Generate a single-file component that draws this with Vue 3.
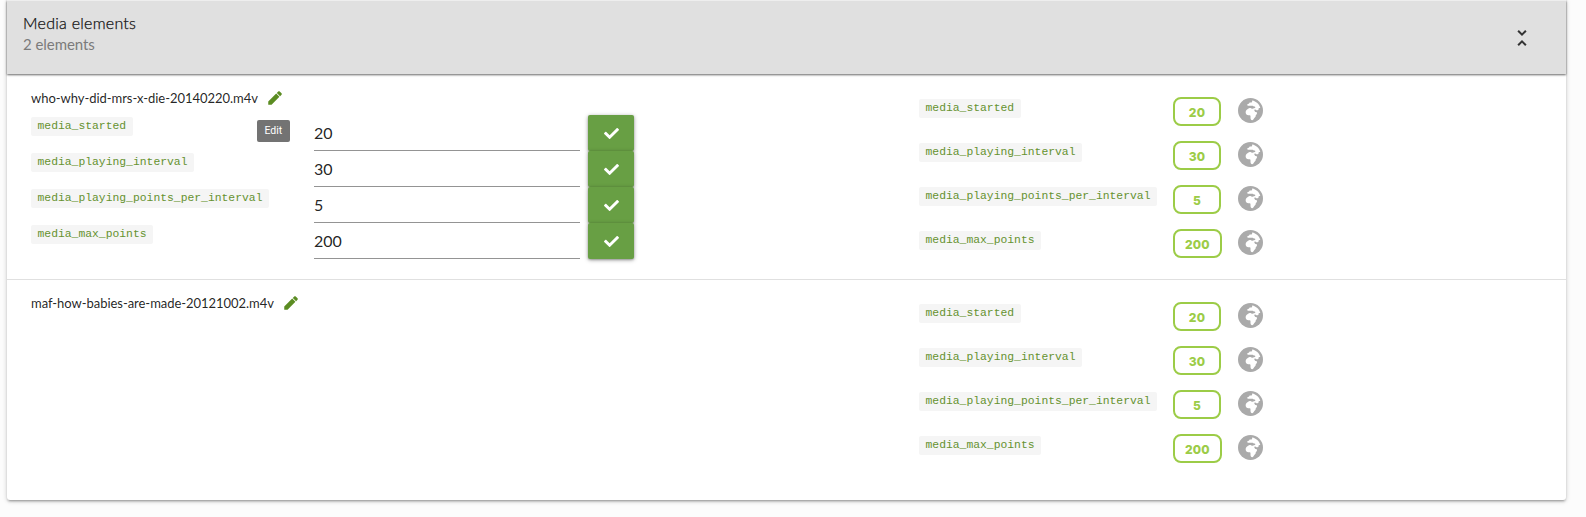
<script setup>
const rows = [
  { key: 'media_started', value: '20' },
  { key: 'media_playing_interval', value: '30' },
  { key: 'media_playing_points_per_interval', value: '5' },
  { key: 'media_max_points', value: '200' },
]
const items = [
  { name: 'who-why-did-mrs-x-die-20140220.m4v', editing: true },
  { name: 'maf-how-babies-are-made-20121002.m4v', editing: false },
]
</script>

<template>
  <div class="page">
    <section class="card">
      <header class="head">
        <div>
          <div class="title">Media elements</div>
          <div class="subtitle">2 elements</div>
        </div>
        <svg class="collapse" viewBox="0 0 24 24">
          <path d="M7.41 18.59L8.83 20 12 16.83 15.17 20l1.41-1.41L12 14l-4.59 4.59zm9.18-13.18L15.17 4 12 7.17 8.83 4 7.41 5.41 12 10l4.59-4.59z" />
        </svg>
      </header>

      <article v-for="item in items" :key="item.name" class="item">
        <div class="left">
          <div class="name">
            <span>{{ item.name }}</span>
            <span class="edit">
              <svg class="pencil" viewBox="0 0 24 24">
                <path d="M3 16.6V21h4.4L17.9 10.4l-4.3-4.3L3 16.6zM20.71 7.7c.6-.6.6-1.4 0-2L18.3 3.29c-.6-.6-1.4-.6-2 0l-1.9 1.9 4.4 4.4 1.91-1.89z" />
              </svg>
              <span v-if="item.editing" class="tooltip">Edit</span>
            </span>
          </div>
          <div v-if="item.editing" class="form">
            <div v-for="row in rows" :key="row.key" class="field">
              <div class="label"><code>{{ row.key }}</code></div>
              <div class="input">{{ row.value }}</div>
              <button class="save">
                <svg viewBox="0 0 512 512">
                  <path d="M173.898 439.404l-166.4-166.4c-9.997-9.997-9.997-26.206 0-36.204l36.203-36.204c9.997-9.998 26.207-9.998 36.204 0L192 312.69 432.095 72.596c9.997-9.997 26.207-9.997 36.204 0l36.203 36.204c9.997 9.997 9.997 26.206 0 36.204l-294.4 294.401c-9.998 9.997-26.207 9.997-36.204-.001z" />
                </svg>
              </button>
            </div>
          </div>
        </div>
        <div class="right">
          <div v-for="row in rows" :key="row.key" class="setting">
            <div class="key"><code>{{ row.key }}</code></div>
            <div class="slot"><span class="badge">{{ row.value }}</span></div>
            <svg class="globe" viewBox="0 8 496 496">
              <circle cx="248" cy="256" r="248" />
              <path d="M408 223.5v6.93c0 5.87-3.32 11.24-8.57 13.86l-15.39 7.7a15.485 15.485 0 0 1-15.53-.97l-18.21-12.14a15.52 15.52 0 0 0-13.5-1.81l-2.65.88c-9.7 3.23-13.66 14.79-7.99 23.3l13.24 19.86c2.87 4.31 7.71 6.9 12.89 6.9h8.21c8.56 0 15.5 6.94 15.5 15.5v11.34c0 3.35-1.09 6.62-3.1 9.3l-18.74 24.98c-1.42 1.9-2.39 4.1-2.83 6.43l-4.3 22.83c-.62 3.29-2.29 6.29-4.76 8.56a159.608 159.608 0 0 0-25 29.16l-13.03 19.55a27.756 27.756 0 0 1-23.09 12.36c-10.51 0-20.12-5.94-24.82-15.34a78.902 78.902 0 0 1-8.33-35.29V367.5c0-8.56-6.94-15.5-15.5-15.5h-25.88c-14.49 0-28.38-5.76-38.63-16a54.659 54.659 0 0 1-16-38.63v-14.06c0-17.19 8.1-33.38 21.85-43.7l27.58-20.69a54.663 54.663 0 0 1 32.78-10.93h.89c8.48 0 16.85 1.97 24.43 5.77l14.72 7.36c3.68 1.84 7.93 2.14 11.83.84l47.31-15.77c6.33-2.11 10.6-8.03 10.6-14.7 0-8.56-6.94-15.5-15.5-15.5h-10.09c-4.11 0-8.05-1.63-10.96-4.54l-6.92-6.92a15.493 15.493 0 0 0-10.96-4.54H199.5c-8.56 0-15.5-6.94-15.5-15.5v-4.4c0-7.11 4.84-13.31 11.74-15.04l14.45-3.61c3.74-.94 7-3.23 9.14-6.44l8.08-12.11c2.87-4.31 7.71-6.9 12.89-6.9h24.21c8.56 0 15.5-6.94 15.5-15.5v-21.7C359.23 71.63 422.86 131.02 441.93 208H423.5c-8.56 0-15.5 6.94-15.5 15.5z" />
            </svg>
          </div>
        </div>
      </article>
    </section>
  </div>
</template>

<style>
body {
  margin: 0;
  background: #fcfcfc;
}
</style>

<style scoped>
.page {
  box-sizing: border-box;
  height: 517px;
  padding: 0 20px 0 7px;
  overflow: hidden;
  font-family: Lato, "Liberation Sans", sans-serif;
  color: rgba(0, 0, 0, 0.87);
}
.card {
  box-sizing: border-box;
  width: 1559px;
  height: 500px;
  background: #fff;
  border-radius: 0 0 3px 3px;
  box-shadow: 0 1px 5px rgba(0, 0, 0, 0.2), 0 2px 2px rgba(0, 0, 0, 0.14), 0 3px 1px -2px rgba(0, 0, 0, 0.12);
}
.head {
  box-sizing: border-box;
  height: 74px;
  display: flex;
  justify-content: space-between;
  padding: 12px 32px 0 16px;
  background: #e0e0e0;
  border-top: 1px solid #eee;
  box-shadow: 0 1px 2px rgba(0, 0, 0, 0.6);
}
.title {
  font-size: 16px;
  font-weight: 300;
  line-height: 20px;
  letter-spacing: 0.26px;
  color: #111;
  -webkit-text-stroke: 0.25px #111;
}
.subtitle {
  font-size: 15px;
  line-height: 22px;
  letter-spacing: -0.05px;
  color: #7b7b7b;
}
.collapse {
  width: 24px;
  height: 24px;
  margin-top: 13px;
  fill: #333;
}
.item {
  box-sizing: border-box;
  height: 205px;
  display: flex;
  padding-left: 24px;
}
.item + .item {
  box-shadow: inset 0 1px #e0e0e0;
}
.left {
  width: 888px;
  padding-top: 14px;
}
.name {
  display: flex;
  align-items: center;
  height: 20px;
  font-size: 13px;
  letter-spacing: -0.04px;
}
.edit {
  position: relative;
  margin-left: 8px;
  height: 18px;
}
.pencil {
  display: block;
  width: 18px;
  height: 18px;
  fill: #5b8c22;
}
.tooltip {
  position: absolute;
  left: -9px;
  top: 31px;
  width: 33px;
  height: 22px;
  border-radius: 2px;
  background: #737373;
  color: #fff;
  font: 10.5px/21px Roboto, sans-serif;
  text-align: center;
}
.form {
  margin-top: 7px;
}
.field {
  display: flex;
  height: 36px;
}
.label {
  width: 283px;
  padding-top: 2px;
}
code {
  box-sizing: border-box;
  display: block;
  width: max-content;
  height: 19px;
  padding: 1px 6.5px 0;
  border-radius: 2px;
  background: #f5f5f5;
  color: #65922f;
  font: 11.375px/17px "Liberation Mono", monospace;
}
.input {
  box-sizing: border-box;
  width: 266px;
  height: 36px;
  border-bottom: 1px solid #949494;
  font-size: 16px;
  line-height: 35px;
}
.save {
  display: flex;
  align-items: center;
  justify-content: center;
  width: 46px;
  height: 36px;
  margin-left: 8px;
  padding: 0;
  border: 0;
  border-radius: 2px;
  background: #689f44;
  box-shadow: 0 1px 4px rgba(0, 0, 0, 0.35), 0 1px 2px rgba(0, 0, 0, 0.2);
}
.save svg {
  width: 15px;
  height: 15px;
  fill: #fff;
}
.right {
  padding-top: 23px;
}
.setting {
  display: flex;
  height: 44px;
}
.key {
  width: 254px;
  padding-top: 2px;
}
.slot {
  width: 65px;
}
.badge {
  box-sizing: border-box;
  display: block;
  width: max-content;
  min-width: 48px;
  height: 29px;
  padding: 0 10px;
  border: 2px solid #9ccc47;
  border-radius: 8px;
  color: #9ccc47;
  font: 800 12px/28px Inter, sans-serif;
  letter-spacing: 0.2px;
  text-align: center;
}
.globe {
  width: 25px;
  height: 25px;
  margin-top: 1px;
  fill: #aaa;
}
.globe path {
  fill: #fff;
}
</style>
